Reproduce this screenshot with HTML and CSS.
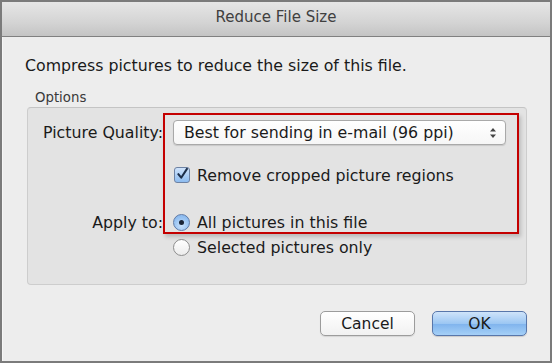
FILE: index.html
```html
<!DOCTYPE html>
<html>
<head>
<meta charset="utf-8">
<link rel="stylesheet" href="styles.css">
</head>
<body>
<div class="window">
  <div class="titlebar">Reduce File Size</div>
  <div class="content">
    <p class="intro">Compress pictures to reduce the size of this file.</p>
    <div class="legend">Options</div>
    <div class="group">
      <div class="row row-quality">
        <div class="label">Picture Quality:</div>
        <div class="popup">
          <span>Best for sending in e-mail (96 ppi)</span>
          <svg class="arrows" width="8" height="12" viewBox="0 0 8 12"><path d="M4 1 L7 4.5 H1 Z M4 11 L7 7.5 H1 Z" fill="#444"/></svg>
        </div>
      </div>
      <div class="row row-check">
        <div class="label"></div>
        <div class="control">
          <span class="checkbox"><svg width="14" height="14" viewBox="0 0 14 14"><path d="M2.5 7.2 L5.6 11 L11.8 1.5" fill="none" stroke="#1d2f4a" stroke-width="2.2" stroke-linecap="round" stroke-linejoin="round"/></svg></span>
          <span>Remove cropped picture regions</span>
        </div>
      </div>
      <div class="row row-radio1">
        <div class="label">Apply to:</div>
        <div class="control">
          <span class="radio on"><span class="dot"></span></span>
          <span>All pictures in this file</span>
        </div>
      </div>
      <div class="row row-radio2">
        <div class="label"></div>
        <div class="control">
          <span class="radio"></span>
          <span>Selected pictures only</span>
        </div>
      </div>
    </div>
    <div class="buttons">
      <button class="btn cancel">Cancel</button>
      <button class="btn ok">OK</button>
    </div>
  </div>
  <div class="highlight"></div>
</div>
</body>
</html>
```
FILE: styles.css
```css
html, body {
  margin: 0;
  padding: 0;
}
body {
  width: 552px;
  height: 363px;
  overflow: hidden;
  font-family: "DejaVu Sans", "Liberation Sans", sans-serif;
  color: #1a1a1a;
}
.window {
  position: relative;
  box-sizing: border-box;
  width: 552px;
  height: 363px;
  border: 2px solid #7b7b7b;
  background: #ededed;
  display: flex;
  flex-direction: column;
}
.titlebar {
  height: 35px;
  box-sizing: border-box;
  border-bottom: 1px solid #808080;
  background: linear-gradient(#e6e6e6, #d4d4d4 60%, #c4c4c4);
  text-align: center;
  font-size: 15px;
  line-height: 30px;
  color: #404040;
}
.content {
  flex: 1;
  display: flex;
  flex-direction: column;
  padding: 0 23px 0 22px;
  border-left: 1px solid #f6f6f6;
}
.intro {
  margin: 20px 0 0 0;
  font-size: 15.8px;
  line-height: 18px;
  white-space: nowrap;
}
.legend {
  margin: 15px 0 0 10px;
  font-size: 13.3px;
  line-height: 16px;
  color: #3a3a3a;
}
.group {
  margin: 1px 0 0 2px;
  height: 178px;
  box-sizing: border-box;
  border: 1px solid #cdcdcd;
  border-top-color: #c4c4c4;
  border-radius: 4px;
  background: #e3e3e3;
  padding-top: 12px;
  display: flex;
  flex-direction: column;
}
.row {
  display: flex;
  align-items: center;
  font-size: 15.8px;
  white-space: nowrap;
}
.label {
  width: 135px;
  flex: none;
  text-align: right;
  margin-right: 10px;
}
.row-quality { height: 25px; }
.row-check { height: 20px; margin-top: 20px; }
.row-radio1 { height: 18px; margin-top: 28px; }
.row-radio2 { height: 18px; margin-top: 7px; }
.popup {
  box-sizing: border-box;
  width: 333px;
  height: 25px;
  border: 1px solid #a9a9a9;
  border-radius: 4px;
  background: linear-gradient(#ffffff, #f6f6f6);
  box-shadow: 0 1px 1px rgba(0,0,0,0.12);
  display: flex;
  align-items: center;
  justify-content: space-between;
  padding: 0 8px 0 10px;
}
.control {
  display: flex;
  align-items: center;
  gap: 7px;
}
.checkbox {
  box-sizing: border-box;
  width: 16px;
  height: 16px;
  margin-left: 1px;
  border: 1px solid #6d82a3;
  border-radius: 3px;
  background: linear-gradient(#cfe3fb, #8dbcf0);
  display: flex;
  align-items: center;
  justify-content: center;
}
.checkbox svg { margin-top: -2px; margin-left: 1px; }
.radio {
  box-sizing: border-box;
  width: 17px;
  height: 17px;
  border-radius: 50%;
  border: 1px solid #8e8e8e;
  background: linear-gradient(#ffffff, #ececec);
  display: flex;
  align-items: center;
  justify-content: center;
}
.radio.on {
  border-color: #5f7aa6;
  background: radial-gradient(circle at 50% 70%, #c9e1fb, #8fbdf0 70%);
}
.dot {
  width: 5px;
  height: 5px;
  border-radius: 50%;
  background: #1b2536;
}
.buttons {
  display: flex;
  justify-content: flex-end;
  gap: 17px;
  margin-top: 26px;
}
.btn {
  box-sizing: border-box;
  width: 95px;
  height: 25px;
  border-radius: 5px;
  font-family: "DejaVu Sans", "Liberation Sans", sans-serif;
  font-size: 15.5px;
  color: #1a1a1a;
  padding: 0;
}
.cancel {
  border: 1px solid #9c9c9c;
  background: linear-gradient(#ffffff, #f1f1f1);
  box-shadow: 0 1px 1px rgba(0,0,0,0.1);
}
.ok {
  border: 1px solid #5877ab;
  background: linear-gradient(#cfe4fa, #9cc7f3 50%, #7fb3ed 51%, #a5d0f7);
  box-shadow: 0 1px 1px rgba(0,0,0,0.15);
}
.highlight {
  position: absolute;
  left: 161px;
  top: 111px;
  width: 352px;
  height: 117px;
  border: 2px solid #c40000;
  box-shadow: 2px 3px 4px rgba(0,0,0,0.18);
  pointer-events: none;
}
```
